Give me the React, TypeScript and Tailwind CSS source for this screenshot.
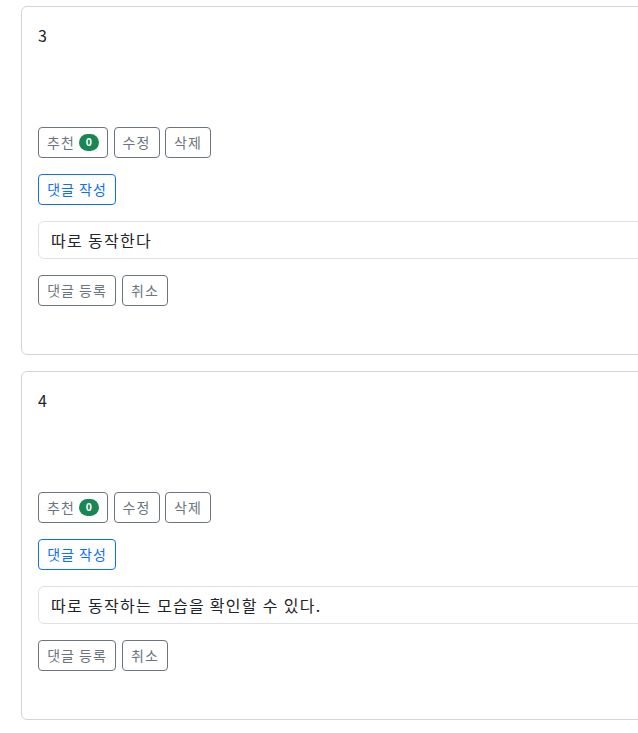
import React from "react";

const font = { fontFamily: '"Noto Sans CJK KR", "Noto Sans", sans-serif' };

const grayBtn =
  "flex h-[31px] items-center justify-center rounded-[4px] border border-[#6c757d] text-[14px] leading-[21px] tracking-[1px] text-[#6c757d]";

function Card({ num, text }: { num: string; text: string }) {
  return (
    <div className="w-[720px] mb-4 rounded-[6px] border border-[#d3d4d5] bg-white px-4 pt-4 pb-[48px]">
      <div className="h-[104px] text-[16px] leading-[24px] text-[#212529]">{num}</div>
      <div className="flex gap-[5.5px]">
        <button className={`${grayBtn} w-[70px] gap-[4px]`}>
          추천
          <span className="flex h-[17px] w-[20px] items-center justify-center rounded-full bg-[#198754] text-[10.5px] font-bold leading-none tracking-normal text-white">
            0
          </span>
        </button>
        <button className={`${grayBtn} w-[46px]`}>수정</button>
        <button className={`${grayBtn} w-[46px]`}>삭제</button>
      </div>
      <div className="mt-4 flex">
        <button className="flex h-[31px] w-[78px] items-center justify-center rounded-[4px] border border-[#0d6efd] text-[14px] leading-[21px] tracking-[1px] text-[#0d6efd]">
          댓글 작성
        </button>
      </div>
      <div className="mt-4 flex h-[38px] items-center rounded-[6px] border border-[#dee2e6] px-3 text-[16px] leading-[24px] tracking-[1.3px] text-[#212529]">
        {text}
      </div>
      <div className="mt-4 flex gap-[6px]">
        <button className={`${grayBtn} w-[78px]`}>댓글 등록</button>
        <button className={`${grayBtn} w-[46px]`}>취소</button>
      </div>
    </div>
  );
}

export default function App() {
  return (
    <div className="h-[733px] w-[638px] overflow-hidden bg-white pl-[21px] pt-[6px]" style={font}>
      <Card num="3" text="따로 동작한다" />
      <Card num="4" text="따로 동작하는 모습을 확인할 수 있다." />
    </div>
  );
}
